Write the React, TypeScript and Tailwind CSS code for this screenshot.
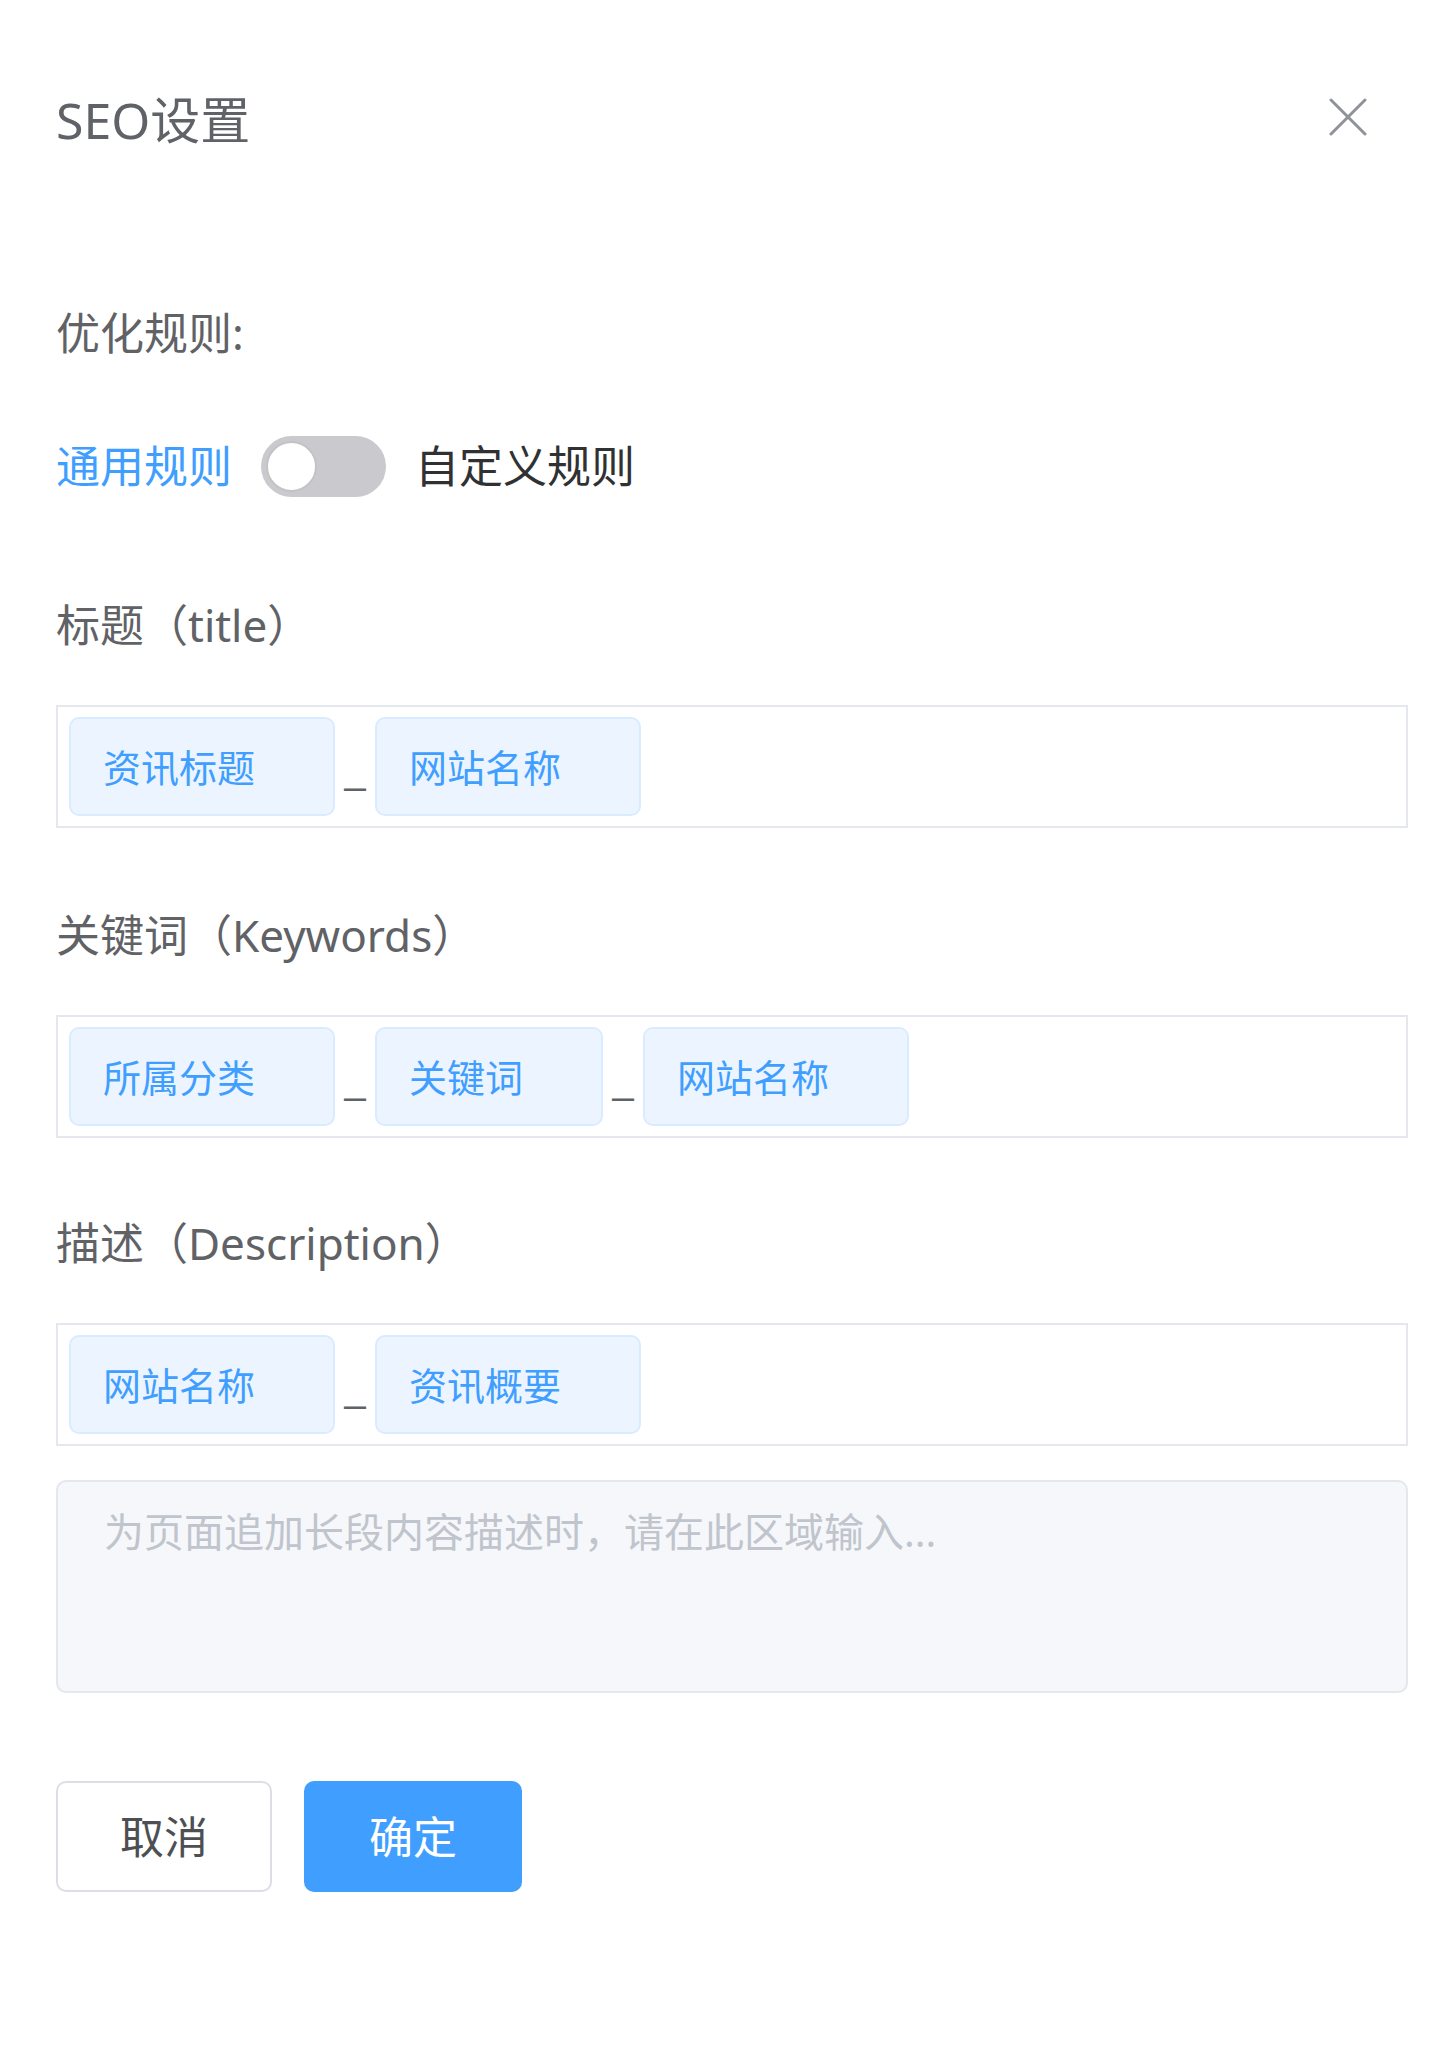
import React from "react";

type Chip = { label: string };

const fontStack = { fontFamily: '"Noto Sans", "Noto Sans CJK SC", sans-serif' };

const TagBox: React.FC<{ chips: Chip[] }> = ({ chips }) => (
  <div className="mt-[50px] flex h-[123px] w-full items-center border-2 border-[#e4e7ed] bg-white pl-[11px]">
    {chips.map((chip, i) => (
      <React.Fragment key={chip.label + i}>
        {i > 0 && (
          <span className="flex h-[99px] w-[40px] items-end justify-center pb-[27px] font-['Liberation_Sans'] text-[38px] leading-none text-[#606266]">
            _
          </span>
        )}
        <span className="flex h-[99px] items-center rounded-[10px] border-2 border-[#d9ecff] bg-[#ecf5ff] pl-[32px] pr-[78px] text-[38px] leading-none text-[#409eff]">
          {chip.label}
        </span>
      </React.Fragment>
    ))}
  </div>
);

const App: React.FC = () => {
  return (
    <div className="min-h-[2046px] w-full bg-white pl-[56px] pr-[32px] pt-[90px]" style={fontStack}>
      {/* Header */}
      <div className="flex h-[60px] items-center justify-between">
        <h1 className="text-[50px] font-normal leading-none text-[#5f6266]">SEO设置</h1>
        <button type="button" className="mr-[40px] -mt-[6px] flex h-[40px] w-[40px] items-center justify-center">
          <svg width="38" height="38" viewBox="0 0 38 38" fill="none" stroke="#8f9298" strokeWidth="3" strokeLinecap="round">
            <path d="M2 2 L36 36" />
            <path d="M36 2 L2 36" />
          </svg>
        </button>
      </div>

      {/* Rule switch */}
      <div className="mt-[153px] flex h-[60px] items-center text-[44px] leading-none text-[#606266]">优化规则:</div>
      <div className="mt-[72px] flex h-[62px] items-center text-[44px] leading-none">
        <span className="text-[#409eff]">通用规则</span>
        <span className="ml-[29px] flex h-[61px] w-[125px] items-center rounded-full bg-[#c9c9ce] pl-[5px]">
          <span className="h-[51px] w-[51px] rounded-full border-2 border-[#c2c2c7] bg-white" />
        </span>
        <span className="ml-[29px] text-[#303133]">自定义规则</span>
      </div>

      {/* Title */}
      <div className="mt-[98px] flex h-[60px] items-center text-[44px] leading-none text-[#606266]">标题（title）</div>
      <TagBox chips={[{ label: "资讯标题" }, { label: "网站名称" }]} />

      {/* Keywords */}
      <div className="mt-[77px] flex h-[60px] items-center text-[44px] leading-none text-[#606266]">关键词（Keywords）</div>
      <TagBox chips={[{ label: "所属分类" }, { label: "关键词" }, { label: "网站名称" }]} />

      {/* Description */}
      <div className="mt-[75px] flex h-[60px] items-center text-[44px] leading-none text-[#606266]">描述（Description）</div>
      <TagBox chips={[{ label: "网站名称" }, { label: "资讯概要" }]} />

      <textarea
        readOnly
        placeholder="为页面追加长段内容描述时，请在此区域输入..."
        className="mt-[34px] block h-[213px] w-full resize-none rounded-[10px] border-2 border-[#e4e7ed] bg-[#f5f7fa] px-[46px] pt-[20px] text-[40px] leading-[1.5] text-[#606266] outline-none placeholder:text-[#c0c4cc]"
        style={fontStack}
      />

      {/* Actions */}
      <div className="mt-[88px] flex gap-[32px]">
        <button
          type="button"
          className="flex h-[111px] w-[216px] items-center justify-center rounded-[10px] border-2 border-[#dcdfe6] bg-white text-[44px] leading-none text-[#4d4f53]"
        >
          取消
        </button>
        <button
          type="button"
          className="flex h-[111px] w-[218px] items-center justify-center rounded-[10px] bg-[#409eff] text-[44px] leading-none text-white"
        >
          确定
        </button>
      </div>
    </div>
  );
};

export default App;
